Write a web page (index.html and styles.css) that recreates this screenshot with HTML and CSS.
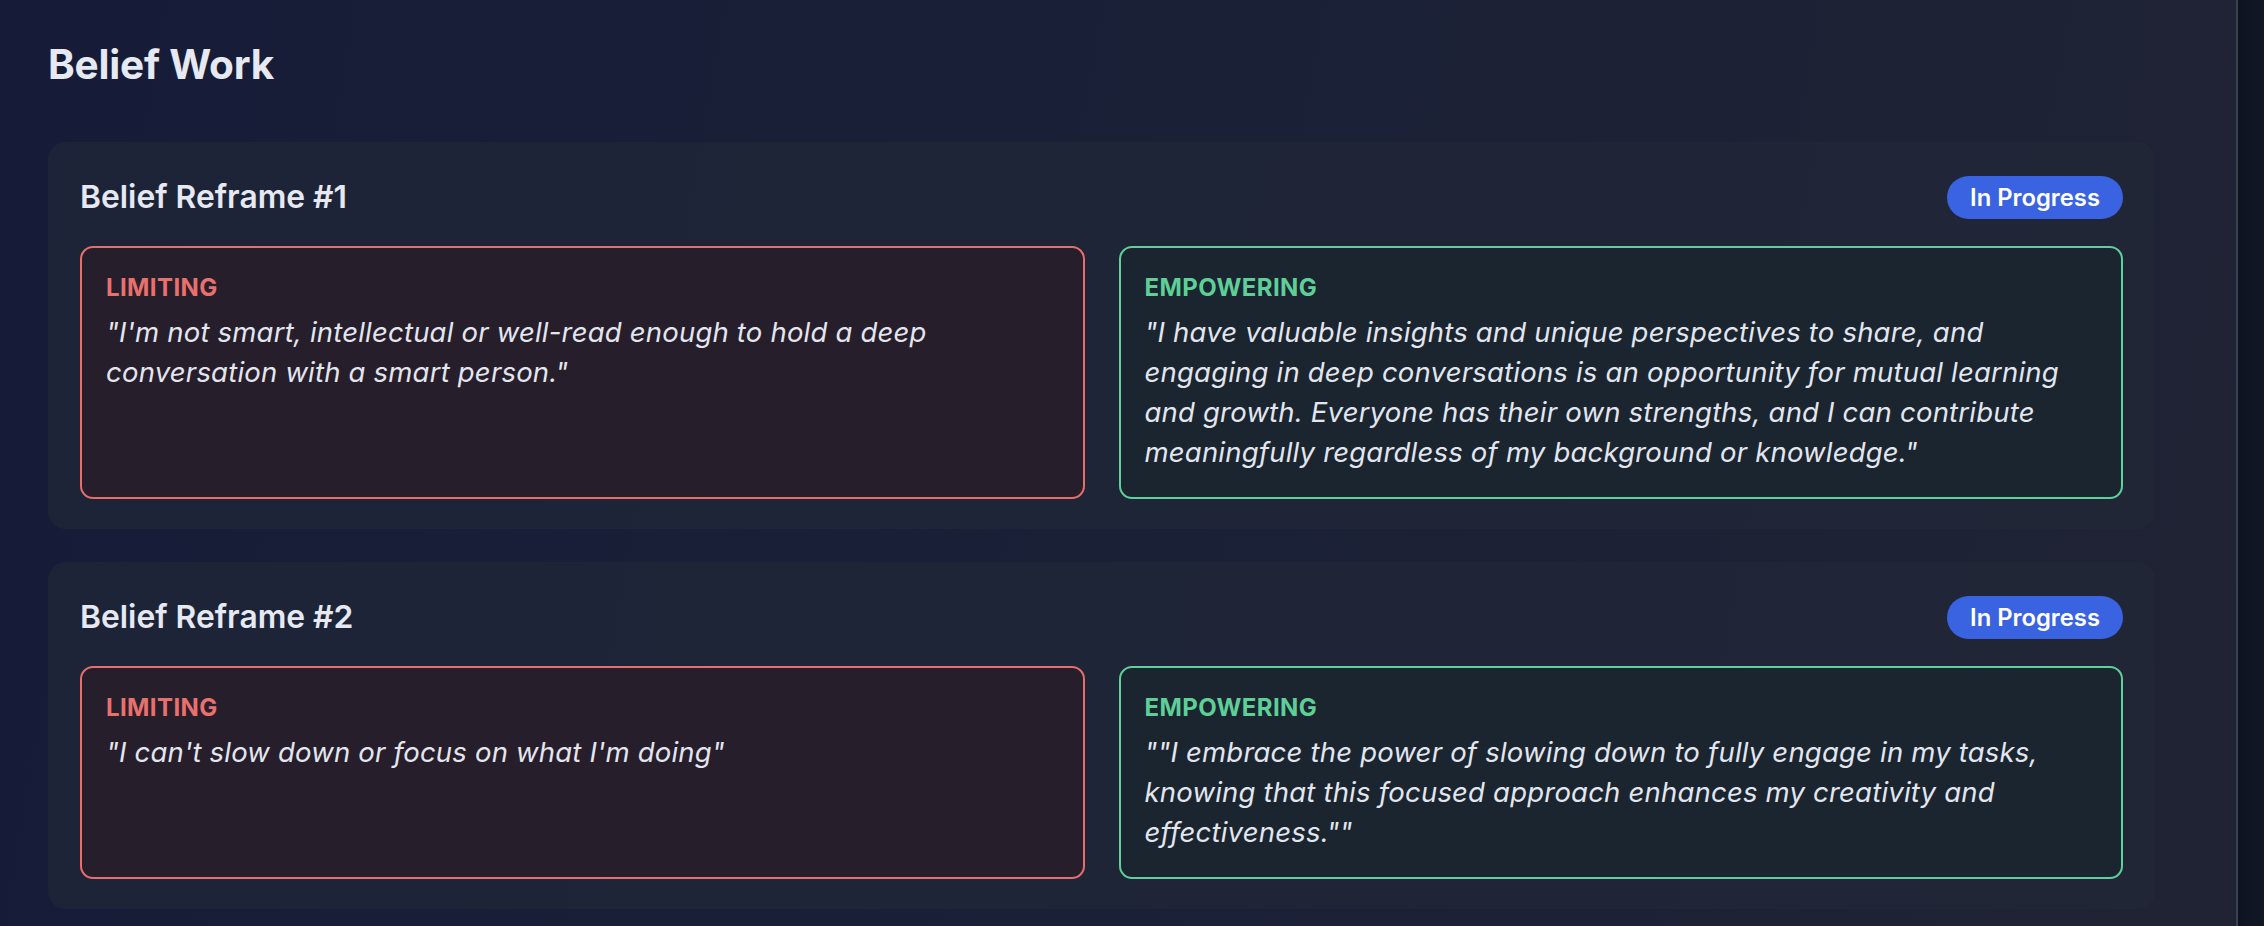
FILE: index.html
```html
<!DOCTYPE html>
<html lang="en">
<head>
<meta charset="utf-8">
<title>Belief Work</title>
<link rel="stylesheet" href="styles.css">
</head>
<body>
<div class="app">
  <main class="main">
    <h1 class="page-title">Belief Work</h1>
    <section class="card">
      <div class="card-head">
        <h2 class="card-title">Belief Reframe #1</h2>
        <span class="badge">In Progress</span>
      </div>
      <div class="pair">
        <div class="belief limiting">
          <div class="label">Limiting</div>
          <p class="quote">"I'm not smart, intellectual or well-read enough to hold a deep conversation with a smart person."</p>
        </div>
        <div class="belief empowering">
          <div class="label">Empowering</div>
          <p class="quote">"I have valuable insights and unique perspectives to share, and engaging in deep conversations is an opportunity for mutual learning and growth. Everyone has their own strengths, and I can contribute meaningfully regardless of my background or knowledge."</p>
        </div>
      </div>
    </section>
    <section class="card">
      <div class="card-head">
        <h2 class="card-title">Belief Reframe #2</h2>
        <span class="badge">In Progress</span>
      </div>
      <div class="pair">
        <div class="belief limiting">
          <div class="label">Limiting</div>
          <p class="quote">"I can't slow down or focus on what I'm doing"</p>
        </div>
        <div class="belief empowering">
          <div class="label">Empowering</div>
          <p class="quote">""I embrace the power of slowing down to fully engage in my tasks, knowing that this focused approach enhances my creativity and effectiveness.""</p>
        </div>
      </div>
    </section>
  </main>
  <aside class="scroll-rail"></aside>
</div>
</body>
</html>
```
FILE: styles.css
```css
* { box-sizing: border-box; }
html, body { margin: 0; height: 100%; }
body {
  font-family: Inter, "Noto Sans", "Liberation Sans", sans-serif;
  color: #e5e8f0;
  background: #171d36;
  overflow: hidden;
}
.app {
  display: flex;
  height: 926px;
}
.main {
  flex: 1;
  padding: 41px 81px 0 48px;
  background: linear-gradient(100deg, #161c38 0%, #1a2036 50%, #1f2334 100%);
}
.page-title {
  margin: 0 0 53px;
  font-size: 40.5px;
  line-height: 48px;
  font-weight: 700;
  color: #e6e9f1;
  letter-spacing: -0.2px;
}
.card {
  background: rgba(34, 42, 56, 0.55);
  border-radius: 18px;
  padding: 33px 32px 30px;
  margin-bottom: 33px;
}
.card-head {
  display: flex;
  align-items: center;
  justify-content: space-between;
  height: 44px;
  margin-bottom: 27px;
}
.card-title {
  margin: 0;
  font-size: 31.8px;
  line-height: 44px;
  font-weight: 600;
  color: #e6e9f1;
}
.badge {
  display: inline-flex;
  align-items: center;
  height: 43px;
  padding: 0 23px;
  border-radius: 22px;
  background: #3a63e2;
  color: #ffffff;
  font-size: 23.8px;
  font-weight: 600;
}
.pair {
  display: grid;
  grid-template-columns: 1fr 1fr;
  gap: 34px;
}
.belief {
  border: 2px solid;
  border-radius: 13px;
  padding: 24px 24px 25px;
}
.limiting {
  border-color: #e46f6d;
  background: #271e2c;
}
.empowering {
  border-color: #5fd09b;
  background: #1a2530;
}
.label {
  font-size: 24px;
  line-height: 32px;
  font-weight: 700;
  text-transform: uppercase;
  letter-spacing: 0.4px;
  margin-bottom: 8px;
}
.limiting .label { color: #e8716e; }
.empowering .label { color: #5fcf98; }
.quote {
  margin: 0;
  font-size: 27.5px;
  line-height: 40px;
  font-style: italic;
  letter-spacing: 0.2px;
  color: #e3e6ee;
}
.scroll-rail {
  width: 28px;
  flex: none;
  border-left: 2px solid #3a4152;
  background: linear-gradient(90deg, #0e1320, #111726);
}
```
